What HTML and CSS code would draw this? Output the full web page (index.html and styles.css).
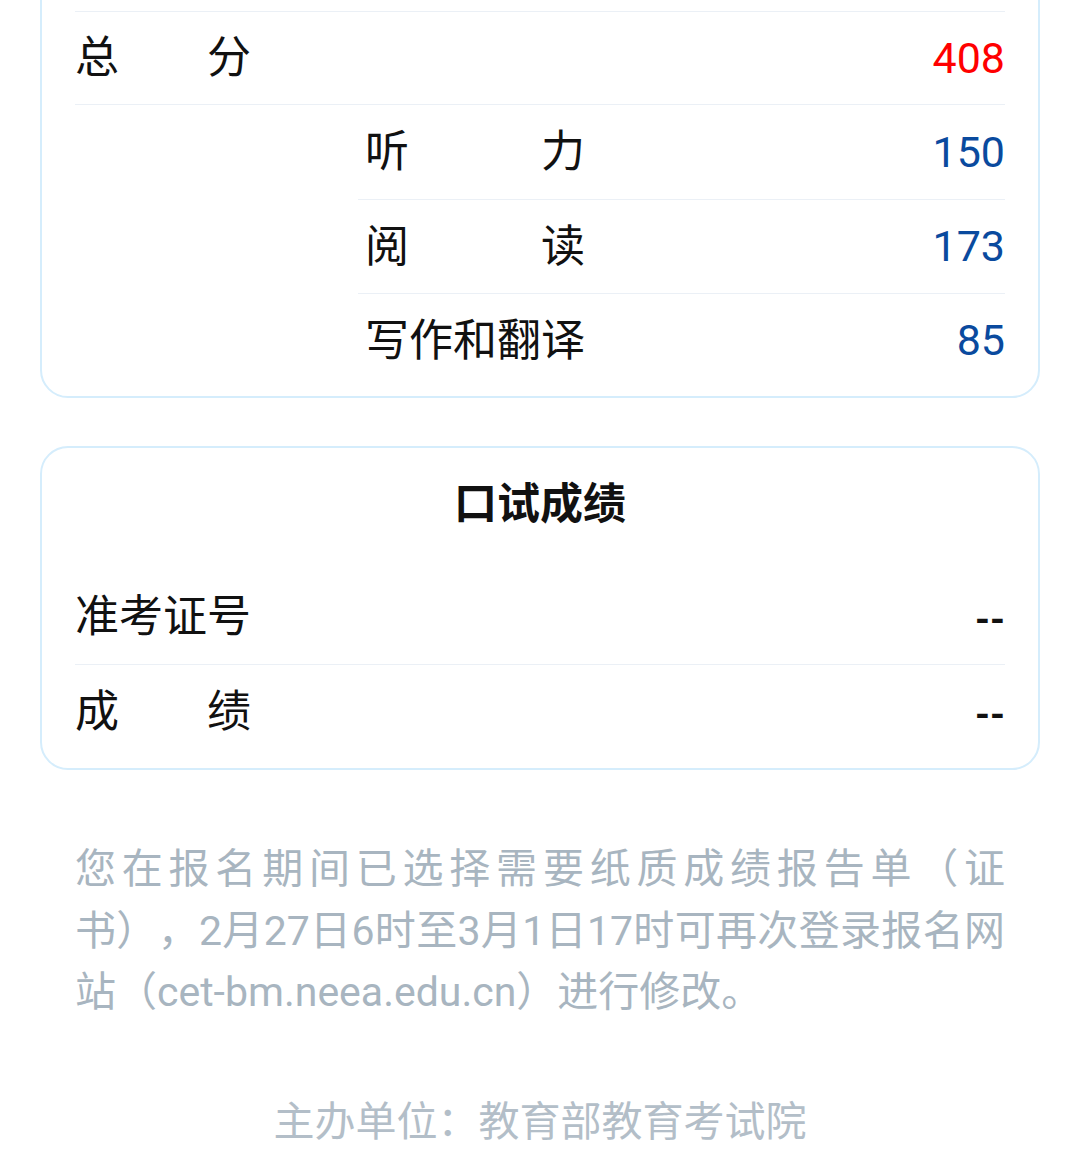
FILE: index.html
```html
<!DOCTYPE html>
<html lang="zh-CN">
<head>
<meta charset="utf-8">
<title>成绩查询</title>
<link rel="stylesheet" href="styles.css">
</head>
<body>
<div class="page">
  <section class="card card-written">
    <div class="row row-total">
      <span class="label l4"><span>总</span><span>分</span></span>
      <span class="val red">408</span>
    </div>
    <div class="sub">
      <div class="row">
        <span class="label l5"><span>听</span><span>力</span></span>
        <span class="val blue">150</span>
      </div>
      <div class="row">
        <span class="label l5"><span>阅</span><span>读</span></span>
        <span class="val blue">173</span>
      </div>
      <div class="row">
        <span class="label l5"><span>写作和翻译</span></span>
        <span class="val blue">85</span>
      </div>
    </div>
  </section>

  <section class="card card-oral">
    <h2 class="card-title">口试成绩</h2>
    <div class="row">
      <span class="label l4"><span>准考证号</span></span>
      <span class="val dash">--</span>
    </div>
    <div class="row">
      <span class="label l4"><span>成</span><span>绩</span></span>
      <span class="val dash">--</span>
    </div>
  </section>

  <div class="note">
    <div class="note-line just">您在报名期间已选择需要纸质成绩报告单（证</div>
    <div class="note-line just">书），2月27日6时至3月1日17时可再次登录报名网</div>
    <div class="note-line">站（cet-bm.neea.edu.cn）进行修改。</div>
  </div>

  <div class="footer">主办单位：教育部教育考试院</div>
</div>
</body>
</html>
```

FILE: styles.css
```css
html, body {
  margin: 0;
  padding: 0;
  background: #ffffff;
}
body {
  font-family: Roboto, "Noto Sans CJK SC", "Noto Sans", sans-serif;
  color: #111111;
  overflow: hidden;
  text-spacing-trim: space-all;
}
.page {
  width: 1080px;
}
.card {
  margin: 0 40px;
  border: 2px solid #d5edfc;
  border-radius: 28px;
  padding: 0 33px 10px;
  background: #fff;
}
.card-written {
  margin-top: -60px;
  padding-top: 69px;
  padding-bottom: 9px;
}
.card-oral {
  margin-top: 48px;
}
.row {
  box-sizing: border-box;
  height: 94px;
  display: flex;
  align-items: center;
  justify-content: space-between;
  font-size: 44px;
}
.row + .row {
  border-top: 1px solid #ebf0f6;
}
.row-total {
  border-top: 1px solid #ebf0f6;
  border-bottom: 1px solid #ebf0f6;
}
.sub {
  margin-left: 283px;
}
.sub .row {
  padding-left: 7px;
}
.label {
  display: flex;
  justify-content: space-between;
  line-height: 1;
  color: #111;
}
.l4 { width: 176px; }
.l5 { width: 220px; }
.val {
  line-height: 1;
  font-size: 43px;
}
.red { color: #ff0000; }
.blue { color: #0a4a9e; }
.dash {
  font-size: 38px;
  font-weight: 700;
  color: #111;
  padding-top: 6px;
}
.card-title {
  margin: 0 0 10px;
  height: 112px;
  line-height: 112px;
  text-align: center;
  font-size: 43px;
  font-weight: 700;
  color: #111;
}
.note {
  margin: 69px 75px 0;
  font-size: 41px;
  line-height: 61.5px;
  color: #a8b5c0;
}
.note-line.just {
  text-align: justify;
  text-align-last: justify;
}
.footer {
  margin-top: 68px;
  text-align: center;
  font-size: 41px;
  line-height: 61.5px;
  color: #b3bec8;
}
```
